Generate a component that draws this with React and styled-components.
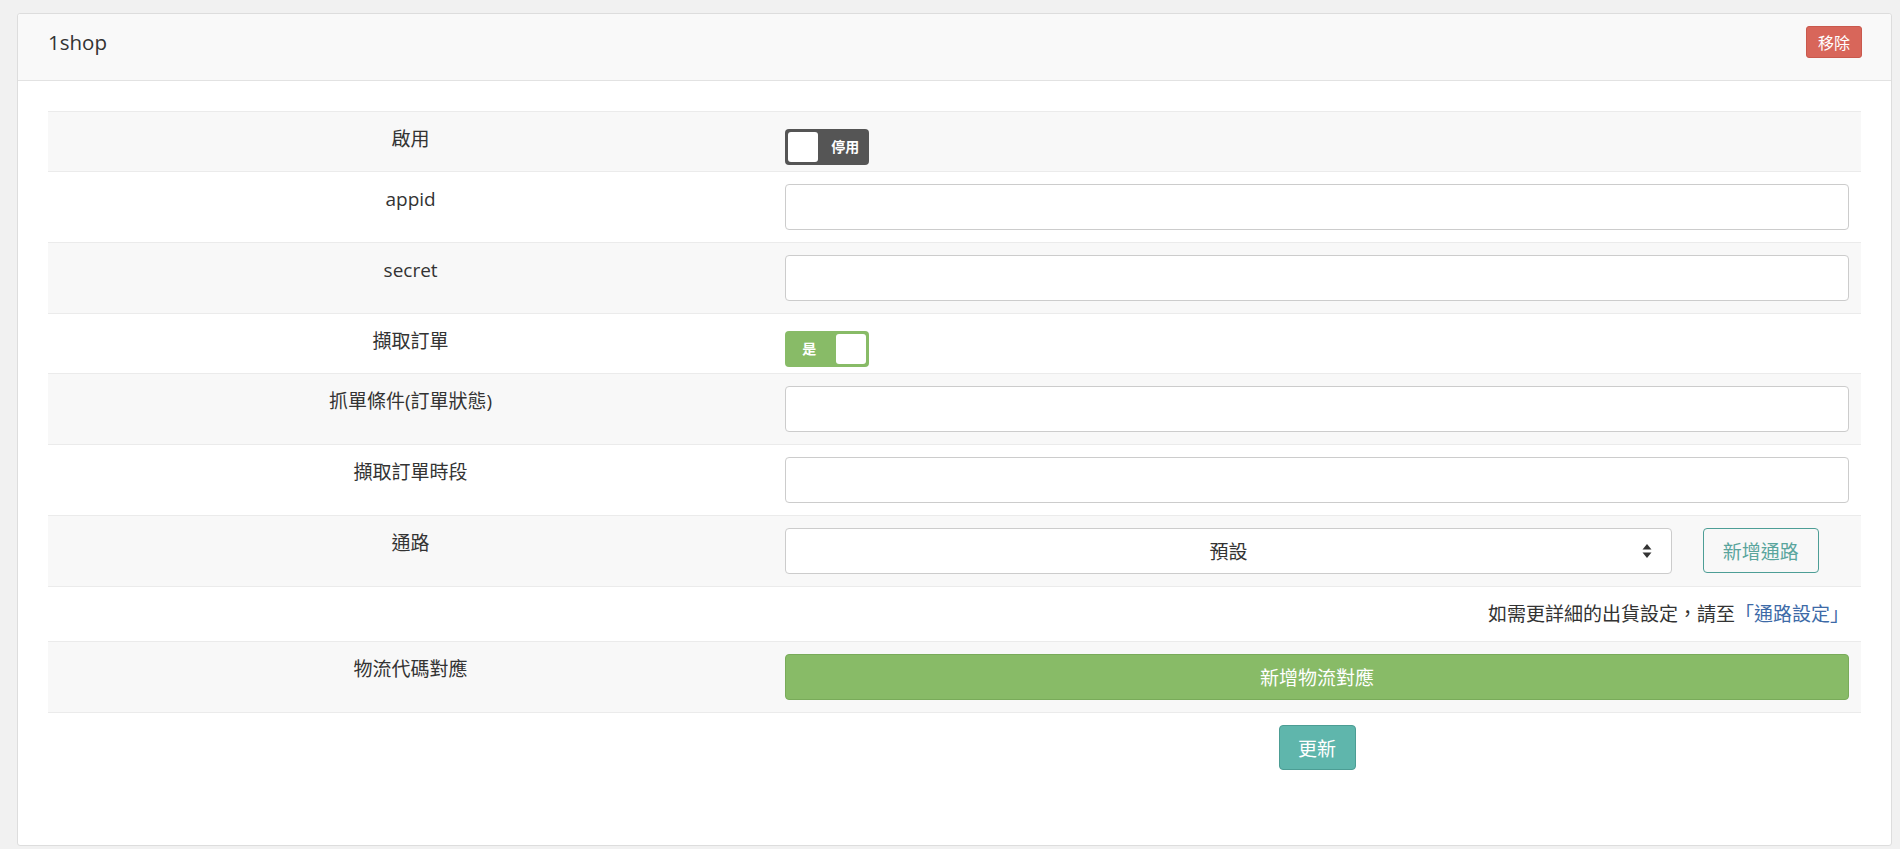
import React from "react";
import styled, { createGlobalStyle } from "styled-components";

const GlobalStyle = createGlobalStyle`
  html, body { margin: 0; padding: 0; }
  body {
    background: #f1f1f1;
    font-family: "Open Sans", "Noto Sans CJK TC", sans-serif;
    font-size: 19px;
    color: #333;
  }
  * { box-sizing: border-box; }
`;

const Page = styled.div`
  padding: 13px 8px 3px 17px;
`;

const Panel = styled.section`
  background: #fff;
  border: 1px solid #dddddd;
  border-radius: 3px;
`;

const PanelHeader = styled.header`
  display: flex;
  align-items: center;
  justify-content: space-between;
  height: 67px;
  padding: 9px 29px 19px 30px;
  background: #f9f9f9;
  border-bottom: 1px solid #e2e2e2;
  border-radius: 3px 3px 0 0;
`;

const Title = styled.h3`
  margin: 0;
  font-size: 20.5px;
  font-weight: 400;
  color: #333;
`;

const DangerButton = styled.button`
  height: 32px;
  width: 56px;
  padding: 0;
  font-family: inherit;
  font-size: 16px;
  color: #fff;
  background: #d8665a;
  border: 1px solid #c9594d;
  border-radius: 3px;
`;

const PanelBody = styled.div`
  padding: 30px 30px 63px;
`;

const FormTable = styled.div`
  display: flex;
  flex-direction: column;
`;

const Row = styled.div`
  display: grid;
  grid-template-columns: 40% 60%;
  background: ${(p) => (p.$striped ? "#f8f8f8" : "transparent")};
  border-top: 1px solid #ebebeb;
`;

const LabelCell = styled.div`
  padding: 14px 12px 12px;
  line-height: 27px;
  text-align: center;
  color: #333;
`;

const ValueCell = styled.div`
  padding: ${(p) => p.$pad || "12px"};
  text-align: ${(p) => p.$align || "left"};
`;

const Toggle = styled.div`
  width: 84px;
  height: 36px;
  border-radius: 4px;
  background: ${(p) => (p.$on ? "#88bb67" : "#555555")};
  display: flex;
  align-items: center;
`;

const ToggleText = styled.span`
  flex: 1;
  text-align: center;
  color: #fff;
  font-size: 14px;
  font-weight: 700;
  line-height: 36px;
`;

const Knob = styled.span`
  width: 30px;
  height: 30px;
  margin: 0 3px;
  background: #fff;
  border-radius: 3px;
`;

const TextInput = styled.input`
  display: block;
  width: 100%;
  height: 46px;
  padding: 6px 16px;
  font-family: inherit;
  font-size: 19px;
  color: #555;
  background: #fff;
  border: 1px solid #cccccc;
  border-radius: 4px;
  outline: none;
`;

const SelectLine = styled.div`
  display: grid;
  grid-template-columns: 83.33% 116px;
  column-gap: 31px;
`;

const SelectBox = styled.div`
  position: relative;
  height: 46px;
  background: #fff;
  border: 1px solid #cccccc;
  border-radius: 4px;
  display: flex;
  align-items: center;
  justify-content: center;
  color: #333;
`;

const SelectArrows = styled.svg`
  position: absolute;
  right: 19px;
  top: 50%;
  transform: translateY(-50%);
`;

const OutlineButton = styled.button`
  height: 45px;
  padding: 0;
  font-family: inherit;
  font-size: 19px;
  color: #5aa59d;
  background: transparent;
  border: 1px solid #4d9e96;
  border-radius: 4px;
`;

const Note = styled.div`
  text-align: right;
  line-height: 30px;
  color: #333;
`;

const NoteLink = styled.a`
  color: #3d6aa7;
  text-decoration: none;
`;

const WideButton = styled.button`
  display: block;
  width: 100%;
  height: 46px;
  padding: 0;
  font-family: inherit;
  font-size: 19px;
  color: #fff;
  background: #88bb67;
  border: 1px solid #79ab5a;
  border-radius: 4px;
`;

const SubmitButton = styled.button`
  width: 77px;
  height: 45px;
  padding: 0;
  font-family: inherit;
  font-size: 19px;
  color: #fff;
  background: #5fb6ac;
  border: 1px solid #4c9d94;
  border-radius: 4px;
`;

const inputRows = [{ label: "appid" }, { label: "secret" }];

export default function App() {
  return (
    <>
      <GlobalStyle />
      <Page>
        <Panel>
          <PanelHeader>
            <Title>1shop</Title>
            <DangerButton>移除</DangerButton>
          </PanelHeader>
          <PanelBody>
            <FormTable>
              <Row $striped>
                <LabelCell>啟用</LabelCell>
                <ValueCell $pad="17px 12px 6px">
                  <Toggle $on={false}>
                    <Knob />
                    <ToggleText>停用</ToggleText>
                  </Toggle>
                </ValueCell>
              </Row>
              {inputRows.map((r, i) => (
                <Row key={r.label} $striped={i % 2 === 1}>
                  <LabelCell>{r.label}</LabelCell>
                  <ValueCell>
                    <TextInput type="text" />
                  </ValueCell>
                </Row>
              ))}
              <Row>
                <LabelCell>擷取訂單</LabelCell>
                <ValueCell $pad="17px 12px 6px">
                  <Toggle $on>
                    <ToggleText>是</ToggleText>
                    <Knob />
                  </Toggle>
                </ValueCell>
              </Row>
              <Row $striped>
                <LabelCell>抓單條件(訂單狀態)</LabelCell>
                <ValueCell>
                  <TextInput type="text" />
                </ValueCell>
              </Row>
              <Row>
                <LabelCell>擷取訂單時段</LabelCell>
                <ValueCell>
                  <TextInput type="text" />
                </ValueCell>
              </Row>
              <Row $striped>
                <LabelCell>通路</LabelCell>
                <ValueCell>
                  <SelectLine>
                    <SelectBox>
                      預設
                      <SelectArrows width="10" height="16" viewBox="0 0 10 16">
                        <path d="M5 1 L9.5 6.5 L0.5 6.5 Z" fill="#333" />
                        <path d="M5 15 L9.5 9.5 L0.5 9.5 Z" fill="#333" />
                      </SelectArrows>
                    </SelectBox>
                    <OutlineButton>新增通路</OutlineButton>
                  </SelectLine>
                </ValueCell>
              </Row>
              <Row>
                <LabelCell />
                <ValueCell>
                  <Note>
                    如需更詳細的出貨設定，請至<NoteLink href="#">「通路設定」</NoteLink>
                  </Note>
                </ValueCell>
              </Row>
              <Row $striped>
                <LabelCell>物流代碼對應</LabelCell>
                <ValueCell>
                  <WideButton>新增物流對應</WideButton>
                </ValueCell>
              </Row>
              <Row>
                <LabelCell />
                <ValueCell $align="center">
                  <SubmitButton>更新</SubmitButton>
                </ValueCell>
              </Row>
            </FormTable>
          </PanelBody>
        </Panel>
      </Page>
    </>
  );
}
